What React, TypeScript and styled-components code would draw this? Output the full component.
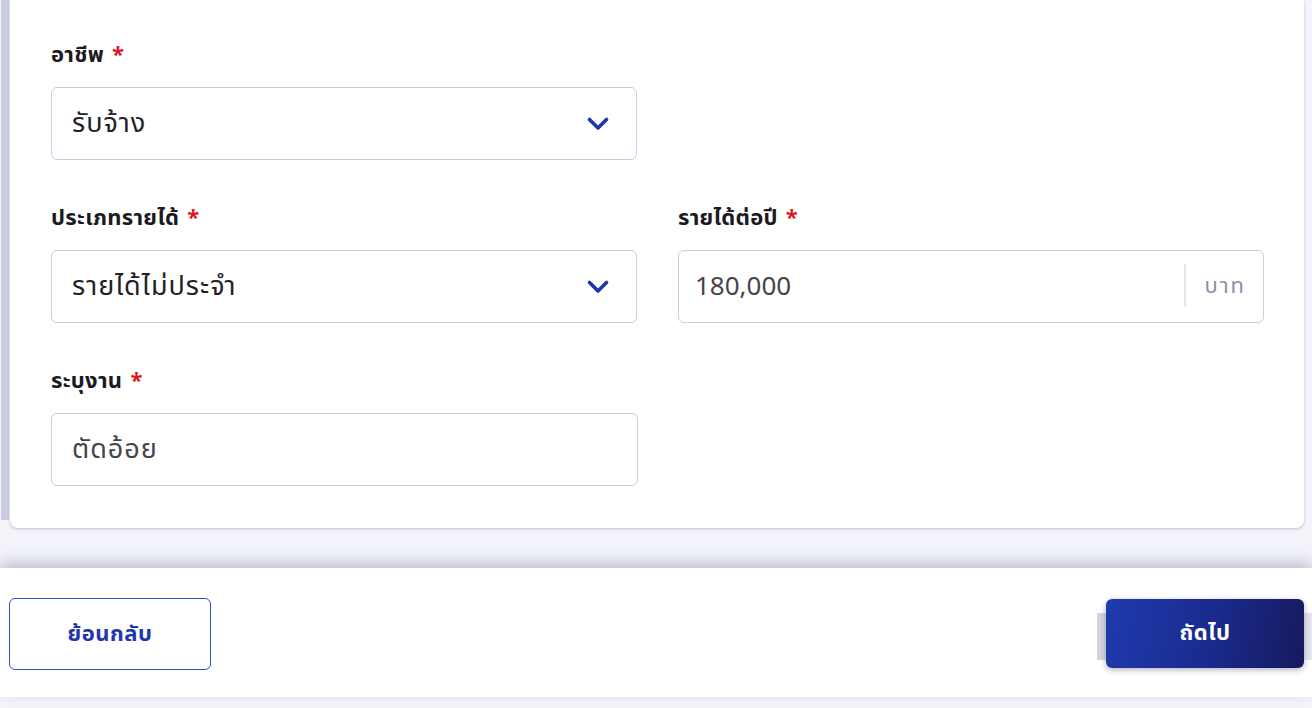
import React from 'react'
import styled, { createGlobalStyle } from 'styled-components'

const GlobalStyle = createGlobalStyle`
  html, body {
    margin: 0;
    padding: 0;
    background: #f4f5fa;
    font-family: "Noto Sans Thai", "Noto Sans", "Liberation Sans", sans-serif;
  }
`

const Page = styled.div`
  width: 1312px;
  height: 708px;
  overflow: hidden;
  background: #f4f5fa;
  display: flex;
  flex-direction: column;
`

const Main = styled.div`
  display: flex;
  align-items: stretch;
  padding-right: 8px;
`

const SideStrip = styled.div`
  width: 8px;
  margin-left: 1px;
  margin-bottom: 8px;
  background: #cbcce0;
`

const Card = styled.section`
  flex: 1;
  margin-left: 1px;
  background: #ffffff;
  border-radius: 0 0 8px 8px;
  box-shadow: 0 1px 3px rgba(120, 122, 160, 0.45);
  padding: 39px 40px 42px 41px;
  display: grid;
  grid-template-columns: 586px 586px;
  column-gap: 41px;
  row-gap: 42px;
`

const Field = styled.div<{ $col?: number }>`
  grid-column: ${(p) => p.$col ?? 1};
  display: flex;
  flex-direction: column;
  gap: 14px;
`

const Label = styled.label`
  font-size: 22px;
  line-height: 34px;
  font-weight: 700;
  color: #1b1b1f;
  letter-spacing: 0.3px;
`

const Star = styled.span`
  color: #e0141e;
  margin-left: 8px;
`

const Box = styled.div<{ $wide?: boolean }>`
  height: 73px;
  box-sizing: border-box;
  width: ${(p) => (p.$wide ? '587px' : '100%')};
  border: 1.5px solid #c9cce3;
  border-radius: 6px;
  background: #fff;
  display: flex;
  align-items: center;
  padding: 0 26px 0 20px;
`

const Value = styled.span<{ $muted?: boolean; $num?: boolean }>`
  flex: 1;
  font-size: ${(p) => (p.$num ? '26px' : '27px')};
  letter-spacing: ${(p) => (p.$num ? '0' : '1px')};
  color: ${(p) => (p.$muted ? '#454548' : '#222226')};
`

const Divider = styled.div`
  width: 2px;
  align-self: stretch;
  margin: 13px 18px 15px 0;
  background: #e4e5ee;
`

const Unit = styled.span`
  font-size: 22px;
  letter-spacing: 2px;
  color: #8a8fa8;
  margin-right: -9px;
`

const Footer = styled.footer`
  margin-top: 40px;
  height: 129px;
  flex-shrink: 0;
  background: #ffffff;
  box-shadow: 0 -6px 14px rgba(140, 142, 175, 0.5);
  display: flex;
  justify-content: space-between;
  align-items: flex-start;
  padding: 30px 8px 0 9px;
  box-sizing: border-box;
  position: relative;
`

const BackButton = styled.button`
  width: 202px;
  height: 72px;
  border: 1.5px solid #2f4fc7;
  border-radius: 6px;
  background: #fff;
  color: #2236b0;
  font-family: inherit;
  font-size: 22px;
  font-weight: 700;
  letter-spacing: 0.5px;
`

const NextWrap = styled.div`
  position: relative;
  margin-top: 1px;
`

const NextShade = styled.div`
  position: absolute;
  left: -9px;
  right: -12px;
  top: 14px;
  height: 47px;
  background: linear-gradient(to right, #d3d4e0, #e6e7ef);
`

const NextButton = styled.button`
  position: relative;
  width: 198px;
  height: 69px;
  border: none;
  border-radius: 6px;
  background: linear-gradient(100deg, #1f3aae 0%, #1a2a8c 55%, #161a5c 100%);
  box-shadow: 0 2px 6px rgba(40, 40, 80, 0.35);
  color: #ffffff;
  font-family: inherit;
  font-size: 22px;
  font-weight: 700;
  letter-spacing: 0.5px;
`

const Chevron = () => (
  <svg width="24" height="16" viewBox="0 0 24 16" fill="none">
    <path d="M3.5 3.5 L12 12 L20.5 3.5" stroke="#1f35a8" strokeWidth="3.6" strokeLinecap="round" strokeLinejoin="round" />
  </svg>
)

export default function App() {
  return (
    <Page>
      <GlobalStyle />
      <Main>
        <SideStrip />
        <Card>
          <Field>
            <Label>อาชีพ<Star>*</Star></Label>
            <Box>
              <Value>รับจ้าง</Value>
              <Chevron />
            </Box>
          </Field>
          <Field>
            <Label>ประเภทรายได้<Star>*</Star></Label>
            <Box>
              <Value>รายได้ไม่ประจำ</Value>
              <Chevron />
            </Box>
          </Field>
          <Field $col={2}>
            <Label>รายได้ต่อปี<Star>*</Star></Label>
            <Box>
              <Value $muted $num style={{ marginLeft: -4 }}>180,000</Value>
              <Divider />
              <Unit>บาท</Unit>
            </Box>
          </Field>
          <Field>
            <Label>ระบุงาน<Star>*</Star></Label>
            <Box $wide>
              <Value $muted>ตัดอ้อย</Value>
            </Box>
          </Field>
        </Card>
      </Main>
      <Footer>
        <BackButton>ย้อนกลับ</BackButton>
        <NextWrap>
          <NextShade />
          <NextButton>ถัดไป</NextButton>
        </NextWrap>
      </Footer>
    </Page>
  )
}
